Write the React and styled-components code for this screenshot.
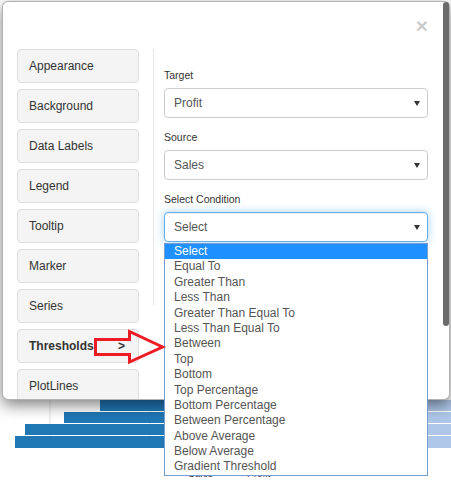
import React from "react";
import styled, { createGlobalStyle } from "styled-components";

const Global = createGlobalStyle`
  html, body { margin: 0; padding: 0; background: #fff; }
  body { font-family: "Liberation Sans", Arial, sans-serif; }
  * { box-sizing: border-box; }
`;

const Page = styled.div`
  position: relative;
  width: 451px;
  height: 489px;
  overflow: hidden;
  background: #fff;
`;

const ChartSvg = styled.svg`
  display: block;
`;

const Modal = styled.div`
  position: absolute;
  left: 2px;
  top: 1px;
  width: 448px;
  height: 399px;
  display: flex;
  background: #fff;
  border: 1px solid rgba(0, 0, 0, 0.3);
  border-radius: 6px;
  box-shadow: 0 5px 15px rgba(0, 0, 0, 0.5);
  z-index: 2;
`;

const ModalMain = styled.div`
  flex: 1;
  min-width: 0;
  display: flex;
  flex-direction: column;
`;

const Header = styled.div`
  height: 47px;
  flex-shrink: 0;
  display: flex;
  justify-content: flex-end;
  align-items: center;
  padding-right: 14px;
`;

const Close = styled.button`
  background: none;
  border: 0;
  padding: 0;
  font-family: "Liberation Sans", Arial, sans-serif;
  font-size: 21px;
  font-weight: bold;
  line-height: 1;
  color: #000;
  opacity: 0.2;
  cursor: pointer;
`;

const Body = styled.div`
  flex: 1;
  min-height: 0;
  display: flex;
  align-items: flex-start;
  padding-left: 14px;
`;

const Nav = styled.div`
  width: 122px;
  height: 100%;
  flex-shrink: 0;
  display: flex;
  flex-direction: column;
  gap: 6px;
  overflow: hidden;
`;

const NavButton = styled.div`
  flex-shrink: 0;
  height: 34px;
  display: flex;
  align-items: center;
  justify-content: space-between;
  padding: 0 13px 0 11px;
  background: #f4f4f4;
  border: 1px solid #dedede;
  border-radius: 4px;
  font-size: 12px;
  color: #333;
  font-weight: ${(p) => (p.$active ? "bold" : "normal")};
`;

const Content = styled.div`
  margin-left: 14px;
  border-left: 1px solid #e5e5e5;
  padding: 18px 0 52px 10px;
  width: 275px;
  flex-shrink: 0;
`;

const Field = styled.div`
  position: relative;
  margin-bottom: 11px;
`;

const Label = styled.div`
  font-size: 10.5px;
  line-height: 16px;
  margin-bottom: 5px;
  color: #333;
`;

const SelectBox = styled.div`
  height: 30px;
  display: flex;
  align-items: center;
  justify-content: space-between;
  padding: 0 7px 0 9px;
  border: 1px solid ${(p) => (p.$focus ? "#66afe9" : "#ccc")};
  border-radius: 4px;
  background: #fff;
  font-size: 12px;
  color: #555;
  box-shadow: ${(p) =>
    p.$focus
      ? "inset 0 1px 1px rgba(0,0,0,.075), 0 0 8px rgba(102,175,233,.6)"
      : "none"};
`;

const Caret = styled.span`
  width: 0;
  height: 0;
  border-left: 3px solid transparent;
  border-right: 3px solid transparent;
  border-top: 5px solid #333;
`;

const OptionList = styled.div`
  position: absolute;
  top: calc(100% + 1px);
  left: 0;
  right: 0;
  background: #fff;
  border: 1px solid #7a9cd3;
  z-index: 5;
`;

const Option = styled.div`
  height: 15.4px;
  line-height: 15.4px;
  padding-left: 9px;
  font-size: 12px;
  white-space: nowrap;
  color: ${(p) => (p.$selected ? "#fff" : "#555")};
  background: ${(p) => (p.$selected ? "#1e90ff" : "#fff")};
`;

const ScrollTrack = styled.div`
  width: 7px;
  flex-shrink: 0;
  display: flex;
  flex-direction: column;
  align-items: flex-end;
`;

const Thumb = styled.div`
  width: 6px;
  height: 324px;
  background: #6b6b6b;
  border-radius: 3px;
`;

const Overlay = styled.svg`
  position: absolute;
  left: 0;
  top: 0;
  pointer-events: none;
  z-index: 10;
`;

const navItems = [
  "Appearance",
  "Background",
  "Data Labels",
  "Legend",
  "Tooltip",
  "Marker",
  "Series",
  "Thresholds",
  "PlotLines",
];

const options = [
  "Select",
  "Equal To",
  "Greater Than",
  "Less Than",
  "Greater Than Equal To",
  "Less Than Equal To",
  "Between",
  "Top",
  "Bottom",
  "Top Percentage",
  "Bottom Percentage",
  "Between Percentage",
  "Above Average",
  "Below Average",
  "Gradient Threshold",
];

const bars = [
  { y: 400, h: 11, x: 100 },
  { y: 412, h: 11, x: 64 },
  { y: 424, h: 11, x: 25 },
  { y: 436, h: 12, x: 15 },
];

export default function App() {
  return (
    <>
      <Global />
      <Page>
        <ChartSvg width="451" height="489" viewBox="0 0 451 489">
          <line x1="50" y1="380" x2="50" y2="448" stroke="#e0e0e0" />
          <line x1="150" y1="380" x2="150" y2="448" stroke="#e0e0e0" />
          {bars.map((b) => (
            <g key={b.y}>
              <rect x={b.x} y={b.y} width={425 - b.x} height={b.h} fill="#1f77b4" />
              <rect x="425" y={b.y} width="26" height={b.h} fill="#aec7e8" />
            </g>
          ))}
          <circle cx="177" cy="471" r="5" fill="#1f77b4" />
          <text x="188" y="477" fontSize="10" fill="#444" fontFamily="Liberation Sans, Arial, sans-serif">Sales</text>
          <circle cx="236" cy="471" r="5" fill="#aec7e8" />
          <text x="247" y="477" fontSize="10" fill="#444" fontFamily="Liberation Sans, Arial, sans-serif">Profit</text>
        </ChartSvg>

        <Modal>
          <ModalMain>
            <Header>
              <Close aria-label="Close">×</Close>
            </Header>
            <Body>
              <Nav>
                {navItems.map((n) => (
                  <NavButton key={n} $active={n === "Thresholds"}>
                    <span>{n}</span>
                    {n === "Thresholds" && <span>&gt;</span>}
                  </NavButton>
                ))}
              </Nav>
              <Content>
                <Field>
                  <Label>Target</Label>
                  <SelectBox>
                    <span>Profit</span>
                    <Caret />
                  </SelectBox>
                </Field>
                <Field>
                  <Label>Source</Label>
                  <SelectBox>
                    <span>Sales</span>
                    <Caret />
                  </SelectBox>
                </Field>
                <Field>
                  <Label>Select Condition</Label>
                  <SelectBox $focus>
                    <span>Select</span>
                    <Caret />
                  </SelectBox>
                  <OptionList>
                    {options.map((o, i) => (
                      <Option key={o} $selected={i === 0}>
                        {o}
                      </Option>
                    ))}
                  </OptionList>
                </Field>
              </Content>
            </Body>
          </ModalMain>
          <ScrollTrack>
            <Thumb />
          </ScrollTrack>
        </Modal>

        <Overlay width="451" height="489" viewBox="0 0 451 489">
          <polygon
            points="95.5,339.5 129.5,339.5 129.5,331.5 162.5,347 129.5,362 129.5,354.5 95.5,354.5"
            fill="none"
            stroke="#ed1c24"
            strokeWidth="3"
            strokeLinejoin="miter"
          />
        </Overlay>
      </Page>
    </>
  );
}
